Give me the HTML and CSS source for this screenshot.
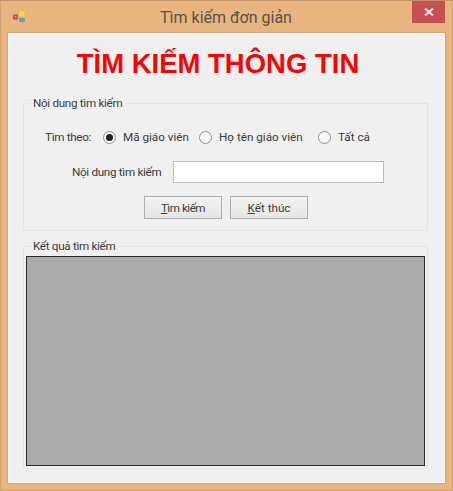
FILE: index.html
```html
<!DOCTYPE html>
<html lang="vi">
<head>
<meta charset="utf-8">
<title>Tìm kiếm đơn giản</title>
<link rel="stylesheet" href="styles.css">
</head>
<body>
<div class="window">
  <div class="titlebar">
    <svg class="app-icon" width="16" height="16" viewBox="0 0 16 16">
      <rect x="1" y="6.5" width="5" height="5" fill="#c9404a" stroke="#a8a0a0" stroke-width="0.6"/>
      <rect x="2.8" y="8.2" width="1.6" height="1.6" fill="#e8a0a0"/>
      <rect x="6.5" y="2.5" width="6.5" height="6.5" fill="#f3d64a" stroke="#d8b840" stroke-width="0.6"/>
      <rect x="7" y="10" width="6" height="4" rx="1.5" fill="#5b9be0"/>
    </svg>
    <div class="title">Tìm kiếm đơn giản</div>
    <div class="close">
      <svg width="10" height="10" viewBox="0 0 10 10"><path d="M1 1.5 L9 8.5 M9 1.5 L1 8.5" stroke="#f6e6e6" stroke-width="2"/></svg>
    </div>
  </div>
  <main class="client">
    <h1 class="heading">TÌM KIẾM THÔNG TIN</h1>
    <fieldset class="group search-group">
      <legend class="tight">Nội dung tìm kiếm</legend>
      <div class="radio-row">
        <span class="radio-label tight">Tìm theo:</span>
        <label class="radio r1"><span class="dot checked"></span>Mã giáo viên</label>
        <label class="radio r2"><span class="dot"></span>Họ tên giáo viên</label>
        <label class="radio"><span class="dot"></span>Tất cả</label>
      </div>
      <div class="input-row">
        <span class="input-label tight">Nội dung tìm kiếm</span>
        <div class="textbox"></div>
      </div>
      <div class="button-row">
        <div class="button"><span class="tighter"><u>T</u>ìm kiếm</span></div>
        <div class="button"><span><u>K</u>ết thúc</span></div>
      </div>
    </fieldset>
    <fieldset class="group result-group">
      <legend class="tight">Kết quả tìm kiếm</legend>
      <div class="grid"></div>
    </fieldset>
  </main>
</div>
</body>
</html>
```
FILE: styles.css
```css
* { box-sizing: border-box; }
html, body { margin: 0; padding: 0; }
body {
  width: 453px;
  height: 491px;
  overflow: hidden;
  font-family: Roboto, "Open Sans", sans-serif;
  font-size: 11.7px;
  color: #3a3a3a;
}
.tight { letter-spacing: -0.32px; }
.tighter { letter-spacing: -0.5px; }
.window {
  width: 453px;
  height: 491px;
  background: #e8b57e;
  border: 1px solid #d2a472;
  border-top-color: #c0946a;
  padding: 0 7px 7px;
  display: flex;
  flex-direction: column;
}
.titlebar {
  height: 32px;
  flex: none;
  position: relative;
  display: flex;
  align-items: center;
  justify-content: center;
}
.app-icon { position: absolute; left: 4px; top: 7px; }
.title {
  font-size: 16px;
  color: #55534f;
  margin-left: -1px;
}
.close {
  position: absolute;
  right: 0;
  top: 0;
  width: 33px;
  height: 22px;
  background: #c75050;
  display: flex;
  align-items: center;
  justify-content: center;
}
.client {
  flex: 1;
  background: #f0f0f0;
  border: 1px solid #f8f8f8;
  box-shadow: 0 0 0 1px #d6a878;
  padding: 0 16px 0 14px;
  display: flex;
  flex-direction: column;
}
.heading {
  margin: 15px 0 0;
  height: 30px;
  line-height: 30px;
  font-family: "Liberation Sans", Arial, sans-serif;
  font-size: 27.5px;
  font-weight: 700;
  color: #f00;
  text-align: center;
  padding-right: 15px;
}
.group {
  margin: 0;
  padding: 0;
  border: 1px solid #e4e4e4;
  min-width: 0;
}
.group legend {
  margin-left: 6px;
  padding: 0 3px;
  line-height: 14px;
}
.search-group {
  margin-top: 17px;
  height: 135px;
}
.radio-row {
  display: flex;
  align-items: center;
  height: 16px;
  margin-top: 19px;
  padding-left: 21px;
}
.radio-label { width: 58px; }
.radio { display: flex; align-items: center; gap: 7px; }
.r1 { width: 96px; }
.r2 { width: 119px; }
.dot {
  width: 13px;
  height: 13px;
  border-radius: 50%;
  border: 1.5px solid #8e8f8f;
  background: #f8f8f8;
  display: flex;
  align-items: center;
  justify-content: center;
  flex: none;
}
.dot.checked::after {
  content: "";
  width: 7px;
  height: 7px;
  border-radius: 50%;
  background: #222;
}
.input-row {
  display: flex;
  align-items: center;
  height: 22px;
  margin-top: 16px;
  padding-left: 48px;
}
.input-label { width: 101px; }
.textbox {
  width: 211px;
  height: 22px;
  background: #fff;
  border: 1px solid #b8b8b8;
}
.button-row {
  display: flex;
  gap: 8px;
  margin-top: 13px;
  padding-left: 120px;
}
.button {
  width: 78px;
  height: 23px;
  background: linear-gradient(#f2f2f2, #e6e6e6);
  border: 1px solid #adadad;
  display: flex;
  align-items: center;
  justify-content: center;
}
.result-group {
  margin-top: 8px;
  height: 230px;
  padding: 3px 2px 0;
}
.result-group legend { margin-left: 4px; }
.grid {
  height: 210px;
  background: #ababab;
  border: 1px solid #2a2a2a;
}
```
